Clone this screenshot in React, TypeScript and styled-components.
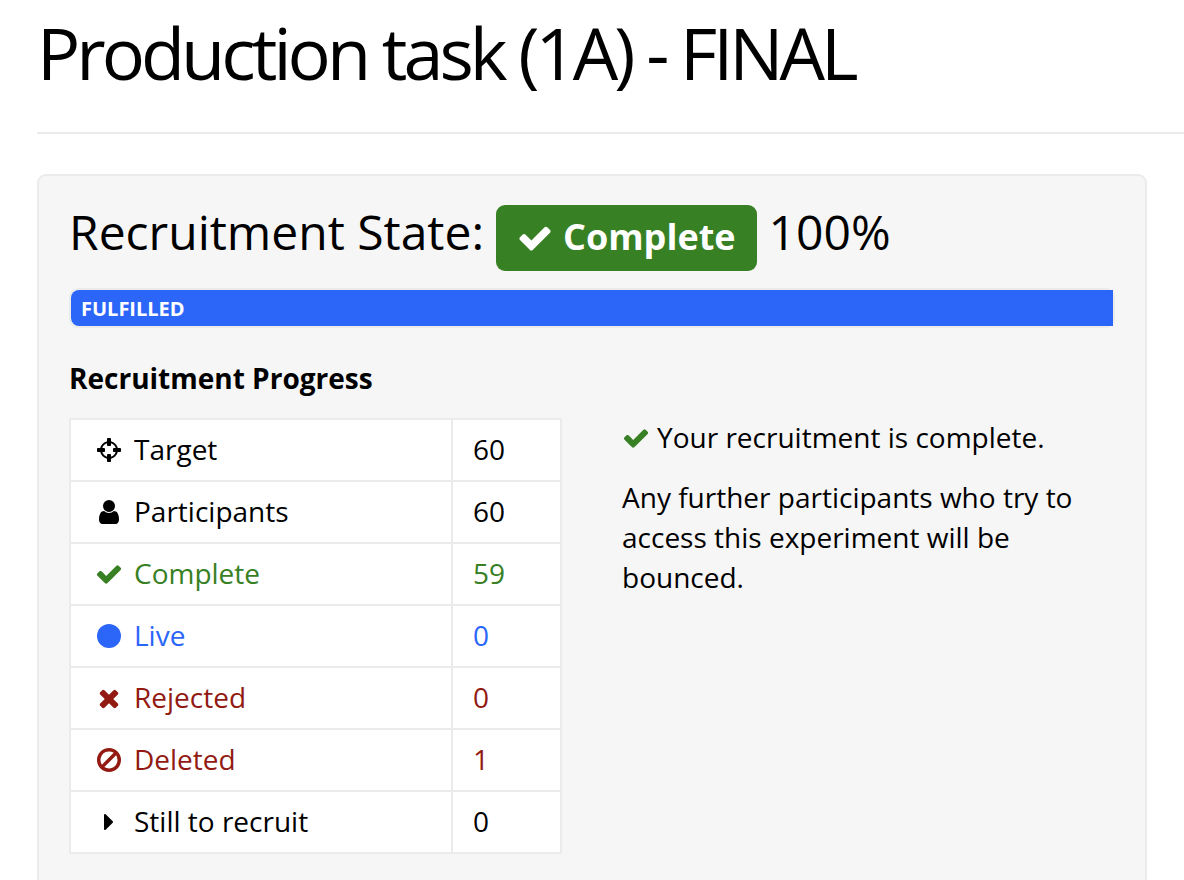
import React from "react";
import styled, { createGlobalStyle } from "styled-components";

const GlobalStyle = createGlobalStyle`
  *, *::before, *::after { box-sizing: border-box; }
  body {
    margin: 0;
    background: #ffffff;
    color: #000000;
    font-family: "Open Sans", "Noto Sans", sans-serif;
    font-size: 28px;
    line-height: 40px;
  }
`;

const green = "#388024";
const blue = "#2c66f8";
const red = "#921a12";
const line = "#ebebeb";

const Page = styled.main`
  padding-left: 37px;
`;

const PageHeader = styled.header`
  padding: 6px 0 34px;
  margin-bottom: 40px;
  border-bottom: 2px solid ${line};
`;

const Title = styled.h1`
  margin: 0;
  font-size: 72px;
  line-height: 92px;
  font-weight: 400;
  letter-spacing: -4px;
`;

const Panel = styled.section`
  margin-right: 37px;
  padding: 23px 30px 60px;
  background: #f6f6f6;
  border: 2px solid ${line};
  border-radius: 9px;
`;

const StateHeading = styled.h2`
  display: flex;
  align-items: flex-start;
  flex-wrap: wrap;
  gap: 12px;
  margin: 0 0 17px;
  font-size: 48px;
  line-height: 66px;
  font-weight: 400;
`;

const StateBadge = styled.span`
  display: inline-flex;
  align-items: center;
  gap: 10px;
  margin-top: 6px;
  padding: 0 21px 2px;
  background: ${green};
  color: #ffffff;
  border-radius: 9px;
  font-size: 36px;
  line-height: 64px;
  font-weight: 700;
`;

const Meter = styled.div`
  border: 2px solid ${line};
  border-radius: 9px;
`;

const MeterFill = styled.div`
  padding: 2px 10px 0;
  background: ${blue};
  border-radius: 8px 0 0 8px;
  color: #ffffff;
  font-size: 20px;
  line-height: 34px;
  font-weight: 700;
`;

const SectionTitle = styled.h3`
  margin: 30px 0 20px;
  font-size: 28px;
  line-height: 40px;
  font-weight: 700;
`;

const Columns = styled.div`
  display: grid;
  grid-template-columns: 1fr 1fr;
  gap: 60px;
  align-items: start;
`;

const ProgressTable = styled.table`
  width: 100%;
  border-collapse: collapse;
  background: #ffffff;
`;

const Row = styled.tr<{ $color?: string }>`
  color: ${(p) => p.$color ?? "inherit"};
`;

const LabelCell = styled.th`
  padding: 9px 20px 11px;
  border: 2px solid ${line};
  font-weight: 400;
  text-align: left;
`;

const ValueCell = styled.td`
  width: 109px;
  padding: 9px 20px 11px;
  border: 2px solid ${line};
`;

const Label = styled.span`
  display: flex;
  align-items: center;
  gap: 7px;
`;

const IconSlot = styled.span`
  display: flex;
  justify-content: center;
  width: 36px;
`;

const Glyph = styled.svg<{ $size?: number; $color?: string }>`
  display: block;
  flex: none;
  width: ${(p) => p.$size ?? 28}px;
  height: ${(p) => p.$size ?? 28}px;
  margin-top: 2px;
  fill: ${(p) => p.$color ?? "currentColor"};
`;

const Message = styled.div`
  display: grid;
  gap: 20px;
  margin-top: -1px;
`;

const Paragraph = styled.p`
  margin: 0;
`;

const StatusLine = styled(Paragraph)`
  display: flex;
  align-items: center;
  gap: 7px;
`;

const icons = {
  check:
    "M1671 566q0 40-28 68l-724 724-136 136q-28 28-68 28t-68-28l-136-136-362-362q-28-28-28-68t28-68l136-136q28-28 68-28t68 28l294 295 656-657q28-28 68-28t68 28l136 136q28 28 28 68z",
  crosshairs:
    "M1325 1024h-109q-26 0-45-19t-19-45v-128q0-26 19-45t45-19h109q-32-108-112.5-188.5t-188.5-112.5v109q0 26-19 45t-45 19h-128q-26 0-45-19t-19-45v-109q-108 32-188.5 112.5t-112.5 188.5h109q26 0 45 19t19 45v128q0 26-19 45t-45 19h-109q32 108 112.5 188.5t188.5 112.5v-109q0-26 19-45t45-19h128q26 0 45 19t19 45v109q108-32 188.5-112.5t112.5-188.5zm339-192v128q0 26-19 45t-45 19h-143q-37 161-154.5 278.5t-278.5 154.5v143q0 26-19 45t-45 19h-128q-26 0-45-19t-19-45v-143q-161-37-278.5-154.5t-154.5-278.5h-143q-26 0-45-19t-19-45v-128q0-26 19-45t45-19h143q37-161 154.5-278.5t278.5-154.5v-143q0-26 19-45t45-19h128q26 0 45 19t19 45v143q161 37 278.5 154.5t154.5 278.5h143q26 0 45 19t19 45z",
  user:
    "M1536 1399q0 109-62.5 187t-150.5 78h-854q-88 0-150.5-78t-62.5-187q0-85 8.5-160.5t31.5-152 58.5-131 94-89 134.5-34.5q131 128 313 128t313-128q76 0 134.5 34.5t94 89 58.5 131 31.5 152 8.5 160.5zm-256-887q0 159-112.5 271.5t-271.5 112.5-271.5-112.5-112.5-271.5 112.5-271.5 271.5-112.5 271.5 112.5 112.5 271.5z",
  circle:
    "M1664 896a768 768 0 1 1-1536 0a768 768 0 1 1 1536 0z",
  times:
    "M1490 1322q0 40-28 68l-136 136q-28 28-68 28t-68-28l-294-294-294 294q-28 28-68 28t-68-28l-136-136q-28-28-28-68t28-68l294-294-294-294q-28-28-28-68t28-68l136-136q28-28 68-28t68 28l294 294 294-294q28-28 68-28t68 28l136 136q28 28 28 68t-28 68l-294 294 294 294q28 28 28 68z",
  ban:
    "M1440 893q0-161-87-295l-754 753q137 89 297 89 111 0 211.5-43.5t173.5-116.5 116-174.5 43-212.5zm-999 299l755-754q-135-91-300-91-148 0-273 73t-198 199-73 274q0 162 89 299zm1223-299q0 157-61 300t-163.5 246-245 164-298.5 61-298.5-61-245-164-163.5-246-61-300 61-299.5 163.5-245.5 245-164 298.5-61 298.5 61 245 164 163.5 245.5 61 299.5z",
  caret:
    "M1152 896q0 26-19 45l-448 448q-19 19-45 19t-45-19-19-45v-896q0-26 19-45t45-19 45 19l448 448q19 19 19 45z",
};

type IconName = keyof typeof icons;

function Icon({ name, size, color }: { name: IconName; size?: number; color?: string }) {
  return (
    <Glyph viewBox="0 0 1792 1792" aria-hidden="true" $size={size} $color={color}>
      <path d={icons[name]} />
    </Glyph>
  );
}

const rows: { icon: IconName; label: string; value: number; color?: string }[] = [
  { icon: "crosshairs", label: "Target", value: 60 },
  { icon: "user", label: "Participants", value: 60 },
  { icon: "check", label: "Complete", value: 59, color: green },
  { icon: "circle", label: "Live", value: 0, color: blue },
  { icon: "times", label: "Rejected", value: 0, color: red },
  { icon: "ban", label: "Deleted", value: 1, color: red },
  { icon: "caret", label: "Still to recruit", value: 0 },
];

export default function App() {
  return (
    <>
      <GlobalStyle />
      <Page>
        <PageHeader>
          <Title>Production task (1A) - FINAL</Title>
        </PageHeader>
        <Panel>
          <StateHeading>
            <span>Recruitment State:</span>
            <StateBadge>
              <Icon name="check" size={36} />
              <span>Complete</span>
            </StateBadge>
            <span>100%</span>
          </StateHeading>
          <Meter>
            <MeterFill>FULFILLED</MeterFill>
          </Meter>
          <SectionTitle>Recruitment Progress</SectionTitle>
          <Columns>
            <ProgressTable>
              <tbody>
                {rows.map((row) => (
                  <Row key={row.label} $color={row.color}>
                    <LabelCell scope="row">
                      <Label>
                        <IconSlot>
                          <Icon name={row.icon} />
                        </IconSlot>
                        {row.label}
                      </Label>
                    </LabelCell>
                    <ValueCell>{row.value}</ValueCell>
                  </Row>
                ))}
              </tbody>
            </ProgressTable>
            <Message>
              <StatusLine>
                <Icon name="check" color={green} />
                Your recruitment is complete.
              </StatusLine>
              <Paragraph>
                Any further participants who try to access this experiment will be bounced.
              </Paragraph>
            </Message>
          </Columns>
        </Panel>
      </Page>
    </>
  );
}
